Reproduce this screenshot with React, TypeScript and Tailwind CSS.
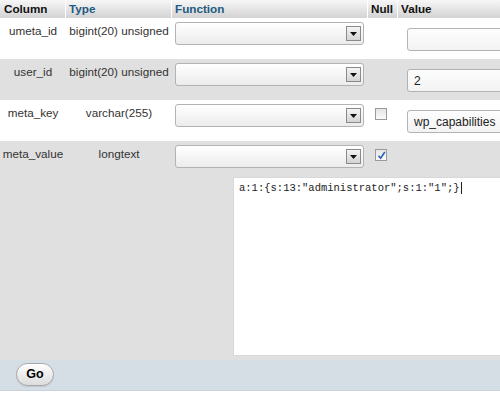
import React from 'react';

type Row = {
  name: string;
  type: string;
  value?: string;
  nullable?: boolean;
  checked?: boolean;
  long?: boolean;
};

const rows: Row[] = [
  { name: 'umeta_id', type: 'bigint(20) unsigned', value: '' },
  { name: 'user_id', type: 'bigint(20) unsigned', value: '2' },
  { name: 'meta_key', type: 'varchar(255)', value: 'wp_capabilities', nullable: true },
  { name: 'meta_value', type: 'longtext', nullable: true, checked: true, long: true },
];

const FunctionSelect = () => (
  <div className="w-[189px] h-[23px] rounded-[3px] border border-[#b3b3b3] bg-gradient-to-b from-white to-[#ececec] flex items-center justify-end pr-[2px] shadow-[inset_0_1px_0_#fff]">
    <div className="w-[15px] h-[15px] border border-[#8a8a8a] bg-gradient-to-b from-[#f4f4f4] to-[#d4d4d4] flex items-center justify-center">
      <svg width="7" height="4" viewBox="0 0 7 4">
        <path d="M0 0h7L3.5 4z" fill="#111" />
      </svg>
    </div>
  </div>
);

const Checkbox = ({ checked }: { checked?: boolean }) => (
  <div className="w-[12px] h-[12px] border border-[#9a9a9a] bg-gradient-to-b from-[#e6e6e6] to-[#fafafa] flex items-center justify-center">
    {checked && (
      <svg width="9" height="9" viewBox="0 0 9 9">
        <path d="M1.5 4.8 3.6 7.2 7.8 1" stroke="#2b5fb8" strokeWidth="1.6" fill="none" />
      </svg>
    )}
  </div>
);

const ValueInput = ({ value }: { value: string }) => (
  <div className="w-[120px] h-[23px] shrink-0 rounded-[3px] border border-[#b3b3b3] bg-gradient-to-b from-[#fdfdfd] to-[#f3f3f3] flex items-center pl-[6px] text-[12px] text-[#222] whitespace-nowrap">
    {value}
  </div>
);

export default function App() {
  return (
    <div className="w-[500px] h-[397px] overflow-hidden bg-white font-['Liberation_Sans',Arial,sans-serif] text-[11.7px] text-[#333]">
      {/* header */}
      <div className="flex h-[18px] font-bold whitespace-nowrap">
        <div className="w-[66px] shrink-0 border-r border-white bg-gradient-to-b from-[#f7f7f7] to-[#d3d3d3] pl-[4px] leading-[18px] text-[#111]">Column</div>
        <div className="w-[106px] shrink-0 border-r border-white bg-gradient-to-b from-[#f7f7f7] to-[#d3d3d3] pl-[3px] leading-[18px] text-[#235a81]">Type</div>
        <div className="w-[196px] shrink-0 border-r border-white bg-gradient-to-b from-[#f7f7f7] to-[#d3d3d3] pl-[3px] leading-[18px] text-[#235a81]">Function</div>
        <div className="w-[30px] shrink-0 border-r border-white bg-gradient-to-b from-[#f7f7f7] to-[#d3d3d3] pl-[3px] leading-[18px] text-[#111]">Null</div>
        <div className="flex-1 bg-gradient-to-b from-[#f7f7f7] to-[#d3d3d3] pl-[3px] leading-[18px] text-[#111]">Value</div>
      </div>

      {rows.map((row, i) => (
        <div key={row.name} className={i % 2 === 1 ? 'bg-[#e0e0e0]' : 'bg-white'}>
          <div className="flex h-[41px] whitespace-nowrap">
            <div className="w-[66px] shrink-0 text-center pt-[5px] leading-[15px]">{row.name}</div>
            <div className="w-[106px] shrink-0 text-center pt-[5px] leading-[15px]">{row.type}</div>
            <div className="w-[196px] shrink-0 pl-[3px] pt-[4px]">
              <FunctionSelect />
            </div>
            <div className="w-[30px] shrink-0 pl-[7px] pt-[8px]">
              {row.nullable && <Checkbox checked={row.checked} />}
            </div>
            <div className="shrink-0 pl-[9px] pt-[10px]">
              {row.value !== undefined && <ValueInput value={row.value} />}
            </div>
          </div>
          {row.long && (
            <div className="pl-[233px] pb-[4px] -mt-[5px]">
              <div className="h-[179px] w-[300px] border border-[#d8d8d8] bg-white pl-[5px] pt-[3px] font-['Liberation_Mono',monospace] text-[10.5px] leading-[14px] text-[#222] whitespace-nowrap">
                a:1:{'{'}s:13:"administrator";s:1:"1";{'}'}
                <span className="inline-block w-px h-[12px] bg-[#222] align-middle ml-px" />
              </div>
            </div>
          )}
        </div>
      ))}

      {/* footer */}
      <div className="h-[31px] bg-[#d5dde5] border-b border-[#c8d2dc] pl-[16px] pt-[3px]">
        <button className="w-[38px] h-[23px] rounded-full border border-[#a8a8a8] bg-gradient-to-b from-white to-[#dcdcdc] font-bold text-[12.5px] text-black leading-none shadow-[0_1px_1px_rgba(0,0,0,0.1)]">
          Go
        </button>
      </div>
    </div>
  );
}
